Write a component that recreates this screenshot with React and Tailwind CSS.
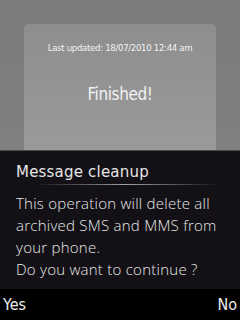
export default function App() {
  return (
    <div className="w-[240px] h-[320px] flex flex-col bg-gradient-to-b from-[#7b7b7b] to-[#858585] overflow-hidden" style={{ fontFamily: '"DejaVu Sans Condensed", "DejaVu Sans", sans-serif' }}>
      <div className="h-[150px] pt-[24px] px-[24px]">
        <div className="h-[126px] rounded-t-[5px] bg-gradient-to-b from-[#8e8e8e] to-[#9a9a9a] flex flex-col items-center text-[#f2f2f2]">
          <div className="mt-[17px] text-[9.5px] tracking-[-0.3px]">Last updated: 18/07/2010 12:44 am</div>
          <div className="mt-[27px] text-[17px] tracking-[-0.4px]">Finished!</div>
        </div>
      </div>

      <div className="h-[139px] bg-[#131116] border-t border-[#4a4a4a] flex flex-col px-[16px] text-[#e8e8e8]">
        <div className="mt-[10px] text-[15px] leading-[22px] tracking-[0.2px] text-[#e6e6e6]" style={{ fontFamily: '"DejaVu Sans", sans-serif' }}>Message cleanup</div>
        <div className="mt-[1px] ml-[18px] mr-[4px] h-px bg-gradient-to-r from-transparent via-[#a0a0a0] to-transparent"></div>
        <div className="mt-[7px] text-[15px] leading-[22px] font-light tracking-[0.25px]" style={{ fontFamily: '"Open Sans", sans-serif' }}>
          <div>This operation will delete all</div>
          <div>archived SMS and MMS from</div>
          <div>your phone.</div>
          <div>Do you want to continue ?</div>
        </div>
      </div>

      <div className="flex-1 bg-black flex items-center justify-between px-[3px] text-[#eeeeee] text-[16px]">
        <span>Yes</span>
        <span>No</span>
      </div>
    </div>
  );
}
